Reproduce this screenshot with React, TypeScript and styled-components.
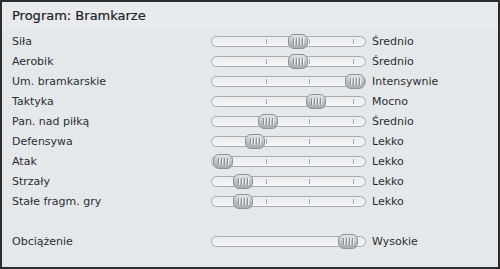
import React from 'react';
import styled, { createGlobalStyle } from 'styled-components';

interface Setting {
    name: string;
    offset: number; // thumb offset inside the track, px
    value: string;
    ticks?: boolean;
}

const settings: Setting[] = [
    { name: 'Siła', offset: 76, value: 'Średnio', ticks: true },
    { name: 'Aerobik', offset: 76, value: 'Średnio', ticks: true },
    { name: 'Um. bramkarskie', offset: 133, value: 'Intensywnie', ticks: true },
    { name: 'Taktyka', offset: 94, value: 'Mocno', ticks: true },
    { name: 'Pan. nad piłką', offset: 46, value: 'Średnio', ticks: true },
    { name: 'Defensywa', offset: 33, value: 'Lekko', ticks: true },
    { name: 'Atak', offset: 1, value: 'Lekko', ticks: true },
    { name: 'Strzały', offset: 21, value: 'Lekko', ticks: true },
    { name: 'Stałe fragm. gry', offset: 21, value: 'Lekko', ticks: true },
];

const load: Setting = { name: 'Obciążenie', offset: 126, value: 'Wysokie' };

const GlobalStyle = createGlobalStyle`
    html, body {
        margin: 0;
        padding: 0;
        background: #e5e8eb;
    }
`;

function Slider(props: { offset: number; ticks?: boolean }) {
    return (
        <Track>
            {props.ticks && [54, 97, 141].map((x) => <Tick key={x} style={{ left: x }} />)}
            <Thumb style={{ left: props.offset }}>
                <Grip />
                <Grip />
                <Grip />
                <Grip />
            </Thumb>
        </Track>
    );
}

function Row(props: Setting) {
    return (
        <RowStyled>
            <Label>{props.name}</Label>
            <Slider offset={props.offset} ticks={props.ticks} />
            <Value>{props.value}</Value>
        </RowStyled>
    );
}

export default function App() {
    return (
        <>
            <GlobalStyle />
            <Panel>
                <Header>Program: Bramkarze</Header>
                <List>
                    {settings.map((s) => <Row key={s.name} {...s} />)}
                    <Spacer />
                    <Row {...load} />
                </List>
            </Panel>
        </>
    );
}

const Panel = styled.div`
    box-sizing: border-box;
    width: 500px;
    height: 269px;
    border: 2px solid #2c2c2c;
    background: #e5e8eb;
    font-family: 'DejaVu Sans', 'Liberation Sans', sans-serif;
    color: #2b2e30;
    display: flex;
    flex-direction: column;
`;

const Header = styled.div`
    height: 28px;
    line-height: 27px;
    padding-left: 10px;
    font-size: 13px;
    color: #1e2022;
    background: #e8ebee;
    -webkit-text-stroke: 0.2px #1e2022;
`;

const List = styled.div`
    display: flex;
    flex-direction: column;
    padding-top: 1px;
`;

const RowStyled = styled.div`
    display: grid;
    grid-template-columns: 193px 155px auto;
    column-gap: 6px;
    align-items: center;
    height: 20px;
    padding-left: 10px;
`;

const Spacer = styled.div`
    height: 20px;
`;

const Label = styled.span`
    font-size: 11px;
    white-space: nowrap;
`;

const Value = styled.span`
    font-size: 11px;
    white-space: nowrap;
`;

const Track = styled.div`
    position: relative;
    box-sizing: border-box;
    height: 11px;
    border: 1px solid #a9adb1;
    border-radius: 6px;
    background: linear-gradient(#e9ebed, #f5f6f7);
`;

const Tick = styled.div`
    position: absolute;
    top: 2px;
    width: 1px;
    height: 5px;
    background: #a7abaf;
`;

const Thumb = styled.div`
    position: absolute;
    top: -3px;
    box-sizing: border-box;
    width: 20px;
    height: 15px;
    border: 1px solid #8b9095;
    border-radius: 6px;
    background: linear-gradient(#e2e4e6, #b8bcc0 60%, #a9adb1);
    display: flex;
    justify-content: center;
    align-items: center;
    gap: 2px;
`;

const Grip = styled.div`
    width: 1px;
    height: 7px;
    background: #8a8f94;
    box-shadow: 1px 0 0 #eef0f2;
`;
